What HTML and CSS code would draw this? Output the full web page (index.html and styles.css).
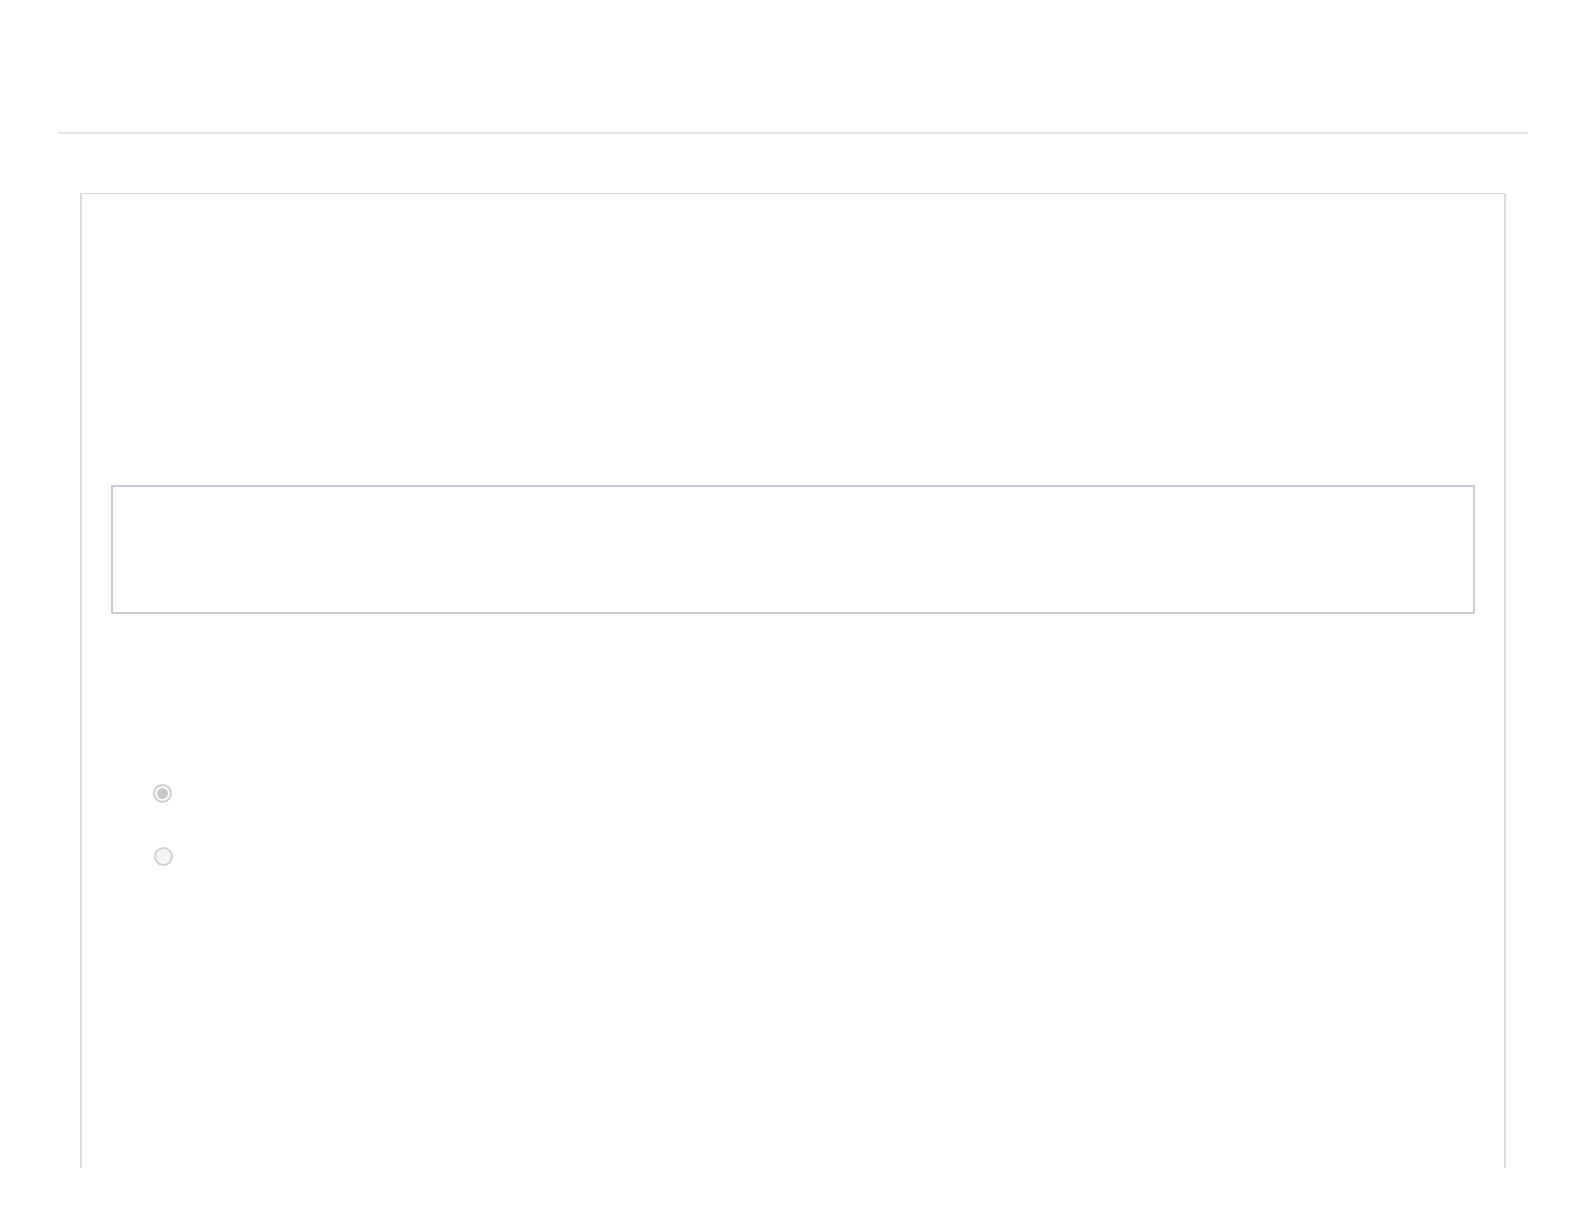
FILE: index.html
```html
<!DOCTYPE html>
<html lang="en">

<head>
    <meta charset="UTF-8">
    <meta name="viewport" content="width=device-width, initial-scale=1.0">
    <title>Form</title>

    <link rel="stylesheet" href="styles.css">
</head>

<body>
    <!-- Header strip -->
    <div class="topbar"></div>

    <!-- Main card -->
    <div class="card">
        <div class="field">
            <textarea class="field-input" readonly></textarea>
        </div>

        <!-- Choices -->
        <div class="choices">
            <label class="choice">
                <input type="radio" name="choice" class="radio" checked disabled>
            </label>
            <label class="choice choice-second">
                <input type="radio" name="choice" class="radio" disabled>
            </label>
        </div>
    </div>
</body>

</html>
```

FILE: styles.css
```css
body {
    font-family: "Liberation Sans", Arial, sans-serif;
    margin: 0;
    background-color: #fff;
}

.topbar {
    height: 132px;
    margin: 0 56px 0 58px;
    border-bottom: 2px solid #e6e3e6;
}

.card {
    box-sizing: border-box;
    height: 975px;
    margin: 59px 78px 0 80px;
    padding: 291px 29px 0 29px;
    border: 2px solid #dcdcdc;
    border-top-width: 1px;
    border-bottom: none;
}

.field-input {
    display: block;
    box-sizing: border-box;
    width: 100%;
    height: 129px;
    margin: 0;
    padding: 8px;
    border: 2px solid #c6ccd7;
    background: #fff;
    resize: none;
    outline: none;
}

.choices {
    display: flex;
    flex-direction: column;
    gap: 44px;
    padding: 170px 0 0 42px;
}

.choice {
    display: flex;
    align-items: center;
    height: 19px;
}

.choice-second {
    padding-left: 1px;
}

.radio {
    appearance: none;
    box-sizing: border-box;
    width: 19px;
    height: 19px;
    margin: 0;
    border: 2px solid #d2d2d2;
    border-radius: 50%;
    background-color: #f4f4f4;
}

    .radio:checked {
        background-color: #c8c8c8;
        box-shadow: inset 0 0 0 2px #fff;
    }
```
